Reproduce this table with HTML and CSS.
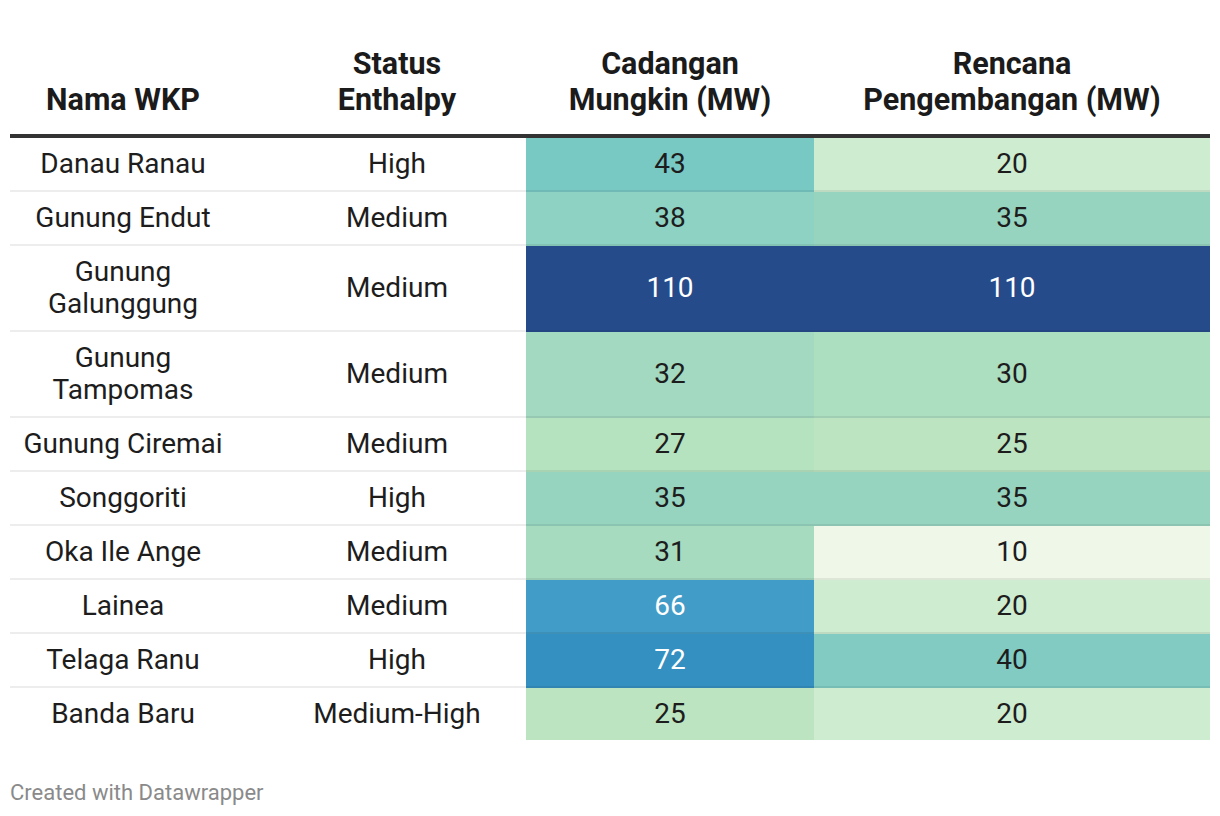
FILE: index.html
```html
<!DOCTYPE html>
<html lang="id">
<head>
<meta charset="utf-8">
<title>Tabel WKP</title>
<link rel="stylesheet" href="styles.css">
</head>
<body>
<div class="chart">
  <table class="dw-table">
    <colgroup>
      <col class="c-name">
      <col class="c-status">
      <col class="c-cad">
      <col class="c-ren">
    </colgroup>
    <thead>
      <tr>
        <th>Nama WKP</th>
        <th class="status">Status<br>Enthalpy</th>
        <th>Cadangan<br>Mungkin (MW)</th>
        <th>Rencana<br>Pengembangan (MW)</th>
      </tr>
    </thead>
    <tbody>
      <tr><td>Danau Ranau</td><td class="status">High</td><td class="h43">43</td><td class="h20">20</td></tr>
      <tr><td>Gunung Endut</td><td class="status">Medium</td><td class="h38">38</td><td class="h35">35</td></tr>
      <tr><td>Gunung<br>Galunggung</td><td class="status">Medium</td><td class="h110">110</td><td class="h110">110</td></tr>
      <tr><td>Gunung<br>Tampomas</td><td class="status">Medium</td><td class="h32">32</td><td class="h30">30</td></tr>
      <tr><td>Gunung Ciremai</td><td class="status">Medium</td><td class="h27">27</td><td class="h25">25</td></tr>
      <tr><td>Songgoriti</td><td class="status">High</td><td class="h35">35</td><td class="h35">35</td></tr>
      <tr><td>Oka Ile Ange</td><td class="status">Medium</td><td class="h31">31</td><td class="h10">10</td></tr>
      <tr><td>Lainea</td><td class="status">Medium</td><td class="h66">66</td><td class="h20">20</td></tr>
      <tr><td>Telaga Ranu</td><td class="status">High</td><td class="h72">72</td><td class="h40">40</td></tr>
      <tr><td>Banda Baru</td><td class="status">Medium-High</td><td class="h25b">25</td><td class="h20">20</td></tr>
    </tbody>
  </table>
  <div class="footer">Created with Datawrapper</div>
</div>
</body>
</html>
```

FILE: styles.css
```css
html, body {
  margin: 0;
  padding: 0;
  background: #ffffff;
}

.chart {
  padding: 10px;
  font-family: Roboto, "Liberation Sans", sans-serif;
  color: #1d1d1d;
}

.dw-table {
  width: 1200px;
  table-layout: fixed;
  border-collapse: separate;
  border-spacing: 0;
}

.c-name { width: 226px; }
.c-status { width: 290px; }
.c-cad { width: 288px; }
.c-ren { width: 396px; }

.dw-table th {
  font-weight: 700;
  font-size: 30.5px;
  line-height: 36px;
  text-align: center;
  vertical-align: bottom;
  padding: 36px 0 16px 0;
  border-bottom: 4px solid #333333;
  color: #1b1b1b;
}

.dw-table td {
  font-size: 28px;
  line-height: 32px;
  text-align: center;
  vertical-align: middle;
  padding: 10px 0;
  border-bottom: 2px solid rgba(0, 0, 0, 0.07);
}

.dw-table tbody tr:last-child td {
  border-bottom: 0;
}

.dw-table .status {
  padding-left: 32px;
}

.footer {
  margin-top: 40px;
  font-size: 22px;
  line-height: 26px;
  color: #8a8a8a;
}

.h43 { background: #78c8c4; }
.h20 { background: #cdecd0; }
.h38 { background: #8dd2c2; }
.h35 { background: #96d4c0; }
.h110 { background: #264b8b; color: #ffffff; }
.h32 { background: #a3d9c0; }
.h30 { background: #acdec0; }
.h27 { background: #b5e2bf; }
.h25 { background: #bde4c1; }
.h31 { background: #a6dbc0; }
.h10 { background: #eff8e8; }
.h66 { background: #429cc8; color: #ffffff; }
.h72 { background: #3490c1; color: #ffffff; }
.h40 { background: #81cbc3; }
.h25b { background: #bce4c0; }
```
